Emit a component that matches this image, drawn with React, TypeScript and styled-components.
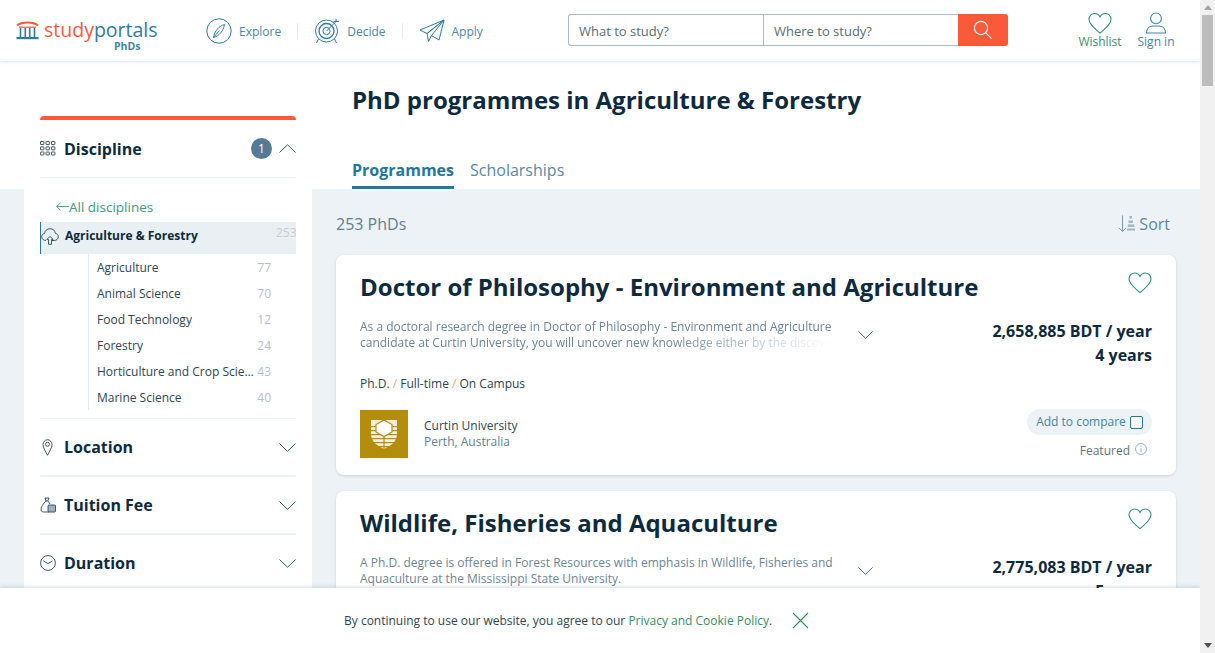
import React from "react";
import styled, { createGlobalStyle } from "styled-components";

const GlobalStyle = createGlobalStyle`
  html, body { margin: 0; padding: 0; background: #fff; overflow: hidden; }
  body { font-family: "Open Sans", "Liberation Sans", sans-serif; color: #0d2b3e; }
  * { box-sizing: border-box; }
`;

const Shell = styled.div`
  display: flex;
  height: 100vh;
  overflow: hidden;
`;

const Page = styled.div`
  width: 1200px;
  flex: none;
  height: 100vh;
  overflow: hidden;
  position: relative;
  display: flex;
  flex-direction: column;
`;

/* the window's scrollbar, as photographed */
const ScrollTrack = styled.div`
  width: 15px;
  flex: none;
  background: #f1f1f1;
  display: flex;
  flex-direction: column;
  align-items: center;
  padding: 5px 0;
`;

const ScrollArrow = styled.span<{ $down?: boolean }>`
  width: 0;
  height: 0;
  border-left: 4px solid transparent;
  border-right: 4px solid transparent;
  ${(p) =>
    p.$down
      ? "border-top: 5px solid #505050; margin-top: auto;"
      : "border-bottom: 5px solid #a3a3a3;"}
`;

const ScrollThumb = styled.span`
  width: 11px;
  height: 71px;
  margin-top: 5px;
  background: #bdbdbd;
`;

/* ---------- header ---------- */
const Header = styled.header`
  height: 61px;
  flex: none;
  display: flex;
  align-items: center;
  padding: 0 25px 0 16px;
  background: #fff;
  box-shadow: 0 1px 3px rgba(40, 80, 110, 0.15);
  position: relative;
  z-index: 2;
`;

const Logo = styled.div`
  width: 190px;
  display: flex;
  flex-direction: column;
  align-items: flex-start;
`;

const LogoRow = styled.div`
  display: flex;
  align-items: center;
  gap: 5px;
  height: 24px;
  margin-top: 9px;
`;

const LogoWord = styled.span<{ $accent?: boolean }>`
  font-family: "Open Sans", sans-serif;
  font-size: 19.5px;
  font-weight: 400;
  line-height: 24px;
  color: ${(p) => (p.$accent ? "#fb5a3a" : "#2d7d9e")};
`;

const LogoWords = styled.div`
  display: flex;
`;

const LogoSub = styled.div`
  font-size: 10.5px;
  font-weight: 700;
  color: #3f86a8;
  margin-left: 98px;
  line-height: 12px;
  margin-top: -2px;
`;

const Nav = styled.nav`
  display: flex;
  align-items: center;
  width: 362px;
  margin-top: 1px;
`;

const NavItem = styled.a`
  display: flex;
  align-items: center;
  gap: 7px;
  font-size: 12px;
  color: #4b87a8;
`;

const NavDivider = styled.span`
  width: 1px;
  height: 16px;
  background: #e6eef3;
  margin: 0 16px;
`;

const Search = styled.div`
  display: flex;
  width: 440px;
  height: 32px;
  margin-top: -1px;
`;

const SearchField = styled.div<{ $first?: boolean }>`
  width: 195px;
  border: 1px solid #a9bcc9;
  border-right-width: 0;
  border-radius: ${(p) => (p.$first ? "3px 0 0 3px" : "0")};
  font-size: 13px;
  color: #5c6d79;
  display: flex;
  align-items: center;
  padding: 2px 0 0 10px;
`;

const SearchButton = styled.button`
  width: 50px;
  border: 0;
  padding: 0;
  background: #fb5a3a;
  border-radius: 0 3px 3px 0;
  display: flex;
  align-items: center;
  justify-content: center;
`;

const HeaderActions = styled.div`
  margin-left: auto;
  display: flex;
  gap: 15px;
`;

const HeaderAction = styled.a<{ $green?: boolean }>`
  display: flex;
  flex-direction: column;
  align-items: center;
  font-size: 12px;
  line-height: 14px;
  width: ${(p) => (p.$green ? 44 : 38)}px;
  color: ${(p) => (p.$green ? "#3a8f78" : "#3f86a8")};

  svg {
    height: 23px;
  }
`;

/* ---------- body ---------- */
const Body = styled.div`
  display: flex;
  align-items: stretch;
  flex: 1;
`;

const SideColumn = styled.aside`
  width: 312px;
  flex: none;
  background: linear-gradient(#fff 128px, #edf2f6 128px);
  padding-left: 24px;
`;

const SidePanel = styled.div`
  background: #fff;
  padding: 55px 16px 0;
  height: 100%;
`;

const FilterHead = styled.div<{ $thin?: boolean }>`
  height: 58px;
  display: flex;
  align-items: center;
  border-bottom: ${(p) => (p.$thin ? 1 : 2)}px solid #edf2f6;
`;

const DisciplineBox = styled.div`
  border-top: 4px solid #fb5a3a;
  border-radius: 4px 4px 0 0;
`;

const FilterIcon = styled.span`
  width: 24px;
  flex: none;
  display: flex;
`;

const FilterTitle = styled.h3`
  margin: 0;
  font-size: 16px;
  font-weight: 700;
  color: #0d2b3e;
  flex: 1;
`;

const Badge = styled.span`
  width: 21px;
  height: 21px;
  border-radius: 50%;
  background: #557a94;
  color: #fff;
  font-size: 12px;
  display: flex;
  align-items: center;
  justify-content: center;
  margin-right: 7px;
`;

const BackLink = styled.a`
  display: flex;
  align-items: center;
  height: 44px;
  padding: 13px 0 0 16px;
  font-size: 13.5px;
  color: #3f9b7f;
`;

const ActiveRow = styled.div`
  height: 32px;
  background: #e8f0f3;
  border-left: 1px solid #24789a;
  display: flex;
  align-items: flex-start;
  font-size: 12px;
  line-height: 16px;
  font-weight: 700;
  padding-top: 6px;
  gap: 6px;
`;

const ActiveIcon = styled.span`
  display: flex;
`;

const ActiveCount = styled.span`
  margin-left: auto;
  margin-top: -3px;
  font-weight: 400;
  color: #c5ced6;
  width: 20px;
  overflow: hidden;
`;

const SubList = styled.ul`
  list-style: none;
  margin: 0 0 8px 48px;
  padding: 0 25px 0 8px;
  border-left: 1px solid #e6ecf0;
  height: 156px;
`;

const SubItem = styled.li`
  height: 26px;
  display: flex;
  align-items: center;
  justify-content: space-between;
  font-size: 12px;
  color: #2c4656;
`;

const SubName = styled.span`
  white-space: nowrap;
  overflow: hidden;
  text-overflow: ellipsis;
  max-width: 158px;
`;

const SubCount = styled.span`
  color: #b4c0c9;
`;

const Rule = styled.div`
  height: 1px;
  background: #edf2f6;
`;

/* ---------- results ---------- */
const Results = styled.main`
  flex: 1;
  min-width: 0;
`;

const TopBand = styled.div`
  height: 128px;
  background: #fff;
  padding: 23px 0 0 40px;
  display: flex;
  flex-direction: column;
`;

const PageTitle = styled.h1`
  margin: -1px 0 0;
  font-size: 24px;
  line-height: 33px;
  font-weight: 700;
  color: #0d2b3e;
`;

const Tabs = styled.div`
  margin-top: auto;
  display: flex;
  gap: 16px;
`;

const Tab = styled.a<{ $active?: boolean }>`
  font-size: 16px;
  line-height: 22px;
  padding-bottom: 5px;
  font-weight: ${(p) => (p.$active ? 700 : 400)};
  color: ${(p) => (p.$active ? "#24789a" : "#5a8aa5")};
  border-bottom: 3px solid ${(p) => (p.$active ? "#24789a" : "transparent")};
`;

const ResultsBody = styled.div`
  background: #edf2f6;
  padding: 0 24px 40px;
`;

const ResultsBar = styled.div`
  height: 66px;
  padding: 4px 6px 0 0;
  display: flex;
  align-items: center;
  justify-content: space-between;
  font-size: 16px;
  color: #5f7f94;
`;

const SortLink = styled.span`
  display: flex;
  align-items: center;
  gap: 3px;
  color: #5f86a3;
`;

const Card = styled.article`
  background: #fff;
  border-radius: 8px;
  height: 220px;
  margin-bottom: 16px;
  padding: 15px 24px 0;
  box-shadow: 0 1px 3px rgba(40, 80, 110, 0.18);
  display: flex;
  flex-direction: column;
`;

const CardHead = styled.div`
  display: flex;
  justify-content: space-between;
  height: 36px;
`;

const CardTitle = styled.h2`
  margin: 0;
  font-size: 24px;
  line-height: 34px;
  font-weight: 700;
  color: #0d2b3e;
`;

const CardHeart = styled.span`
  margin-top: 2px;
`;

const CardMiddle = styled.div`
  display: flex;
  margin-top: 13px;
  height: 54px;
`;

const Description = styled.p<{ $fade?: boolean }>`
  margin: 0;
  width: 490px;
  height: 32px;
  overflow: hidden;
  font-size: 12px;
  line-height: 16px;
  color: #6c8698;
  ${(p) =>
    p.$fade
      ? `-webkit-mask: linear-gradient(#000, #000) top / 100% 16px no-repeat,
           linear-gradient(90deg, #000 62%, transparent 96%) bottom / 100% 16px no-repeat;
         mask: linear-gradient(#000, #000) top / 100% 16px no-repeat,
           linear-gradient(90deg, #000 62%, transparent 96%) bottom / 100% 16px no-repeat;`
      : ""}
`;

const Expand = styled.span`
  margin-left: 8px;
  margin-top: 3px;
`;

const Price = styled.div`
  margin-left: auto;
  text-align: right;
  font-size: 16px;
  line-height: 24px;
  font-weight: 700;
  color: #0d2b3e;
`;

const Meta = styled.div`
  font-size: 12px;
  line-height: 16px;
  color: #2c4656;
  margin-top: 3px;
`;

const Slash = styled.span`
  color: #f2a36b;
`;

const CardFoot = styled.div`
  display: flex;
  align-items: flex-start;
  margin-top: 18px;
`;

const UniLogo = styled.div`
  width: 48px;
  height: 48px;
  background: #b38d0b;
  display: flex;
  align-items: center;
  justify-content: center;
`;

const UniText = styled.div`
  margin-left: 16px;
  padding-top: 8px;
  font-size: 12px;
  line-height: 16px;
  color: #2c4656;
`;

const UniPlace = styled.div`
  color: #5f7f94;
`;

const CompareCol = styled.div`
  margin-left: auto;
  display: flex;
  flex-direction: column;
  align-items: flex-end;
`;

const ComparePill = styled.div`
  height: 26px;
  width: 125px;
  margin-top: -1px;
  border-radius: 13px;
  background: #edf2f6;
  display: flex;
  align-items: center;
  justify-content: center;
  gap: 4px;
  font-size: 12px;
  line-height: 16px;
  color: #3f86a8;
`;

const CompareBox = styled.span`
  width: 13px;
  height: 13px;
  border: 1px solid #24789a;
  border-radius: 2px;
  background: #fff;
`;

const Featured = styled.div`
  display: flex;
  align-items: center;
  gap: 5px;
  font-size: 12px;
  color: #5f7480;
  margin: 7px 5px 0 0;
`;

const InfoWrap = styled.span`
  display: flex;
  margin-top: -3px;
`;

/* ---------- cookie bar ---------- */
const CookieBar = styled.div`
  position: absolute;
  left: 0;
  right: 0;
  bottom: 0;
  height: 65px;
  background: #fff;
  box-shadow: 0 -1px 4px rgba(40, 80, 110, 0.2);
  display: flex;
  align-items: center;
  padding-left: 344px;
  font-size: 12px;
  color: #2c4656;
  z-index: 5;
`;

const CookieLink = styled.a`
  color: #2f9068;
`;

const CookieClose = styled.span`
  margin-left: 20px;
  display: flex;
`;

/* ---------- drawings ---------- */
const Heart: React.FC<{ size?: number }> = ({ size = 24 }) => (
  <svg width={size} height={size * 0.92} viewBox="0 0 24 22" fill="none" stroke="#2a8f80" strokeWidth="1.1">
    <path d="M12 20.6 C8 17 1 12.4 1 6.8 C1 3.4 3.6 1 6.6 1 C9 1 11 2.4 12 4.4 C13 2.4 15 1 17.4 1 C20.4 1 23 3.4 23 6.8 C23 12.4 16 17 12 20.6 Z" />
  </svg>
);

const Chevron: React.FC<{ up?: boolean; size?: number }> = ({ up, size = 17 }) => (
  <svg width={size} height={size * 0.53} viewBox="0 0 17 9" fill="none" stroke="#25597a" strokeWidth="1">
    <path d={up ? "M0.5 8.5 L8.5 0.7 L16.5 8.5" : "M0.5 0.5 L8.5 8.3 L16.5 0.5"} />
  </svg>
);

const CompassIcon = () => (
  <svg width="26" height="26" viewBox="0 0 26 26" fill="none" stroke="#2d7d9e" strokeWidth="1">
    <circle cx="13" cy="13" r="12.2" />
    <path d="M18.5 6.5 C13 8 8.5 13 7.5 19.5 C13 18 17.5 13 18.5 6.5 Z M7.5 19.5 L13.5 12.5" />
  </svg>
);

const TargetIcon = () => (
  <svg width="26" height="26" viewBox="0 0 26 26" fill="none" stroke="#2d7d9e" strokeWidth="1">
    <circle cx="12.5" cy="13" r="11" />
    <circle cx="12.5" cy="13" r="7.5" strokeWidth="1.3" />
    <circle cx="12.5" cy="13" r="3.6" />
    <path d="M12.5 13 L22 3.5 M19.5 3.5 L22 3.5 L22 1 M22 3.5 L25 3.5 M4.5 21 L2.5 25 M20.5 21 L22.5 25" />
  </svg>
);

const PlaneIcon = () => (
  <svg width="26" height="24" viewBox="0 0 26 24" fill="none" stroke="#2d7d9e" strokeWidth="1">
    <path d="M25 1 L1 11 L8 14.5 Z M25 1 L8 14.5 L9.5 22.5 L12.5 16.5 M25 1 L12.5 16.5 L20 21 Z" />
  </svg>
);

const SearchIcon = () => (
  <svg width="20" height="20" viewBox="0 0 20 20" fill="none" stroke="#fff" strokeWidth="1.1">
    <circle cx="8" cy="8" r="6.6" />
    <path d="M12.8 12.8 L18.6 18.6" />
  </svg>
);

const UserIcon = () => (
  <svg width="22" height="23" viewBox="0 0 22 23" fill="none" stroke="#3f86a8" strokeWidth="1.1">
    <circle cx="11" cy="6.4" r="5.4" />
    <path d="M1.5 21 C1.5 16.5 4.5 14 8 14 L14 14 C17.5 14 20.5 16.5 20.5 21 Z" />
  </svg>
);

const LogoMark = () => (
  <svg width="23" height="20" viewBox="0 0 23 20" fill="none">
    <path d="M1 5.5 C6 1.5 17 1.5 22 5.5" stroke="#fb5a3a" strokeWidth="2.2" />
    <path d="M3 7.2 H20" stroke="#fb5a3a" strokeWidth="1.2" />
    <path d="M4.5 8 V17 M9.3 8 V17 M13.7 8 V17 M18.5 8 V17" stroke="#2d7d9e" strokeWidth="1.6" />
    <rect x="0.5" y="17" width="22" height="2.2" fill="#2d7d9e" />
  </svg>
);

const GridIcon = () => (
  <svg width="16" height="15" viewBox="0 0 16 15" fill="none" stroke="#2c4656" strokeWidth="0.9">
    {[0.5, 6, 11.5].map((x) =>
      [0.5, 5.8, 11].map((y) => <rect key={`${x}-${y}`} x={x} y={y} width="3.4" height="3" rx="0.4" />)
    )}
  </svg>
);

const PinIcon = () => (
  <svg width="15" height="17" viewBox="0 0 15 17" fill="none" stroke="#2c4656" strokeWidth="0.9">
    <path d="M7.5 16.3 C5.5 12 3 9 3 5.5 C3 3 5 0.7 7.5 0.7 C10 0.7 12 3 12 5.5 C12 9 9.5 12 7.5 16.3 Z" />
    <circle cx="7.5" cy="5.3" r="2" />
  </svg>
);

const FeeIcon = () => (
  <svg width="16" height="16" viewBox="0 0 16 16" fill="none" stroke="#2c4656" strokeWidth="0.9">
    <path d="M5 1 L9 1 L7.8 4 L6 4 Z M6 4 C3 7 0.8 10 1 13 C1.2 14.8 3 15 5 15 L9 15" />
    <path d="M7.8 4 C8.5 5 9.5 6 10 7" />
    <rect x="8" y="8" width="7.5" height="7" rx="1" fill="#9db2c0" />
  </svg>
);

const ClockIcon = () => (
  <svg width="16" height="16" viewBox="0 0 16 16" fill="none" stroke="#2c4656" strokeWidth="0.9">
    <circle cx="8" cy="8" r="7.4" />
    <path d="M3.5 6 L8 8.6 L12.5 6" />
  </svg>
);

const TreeIcon = () => (
  <svg width="18" height="17" viewBox="0 0 18 17" fill="none" stroke="#2c4656" strokeWidth="0.9">
    <path d="M5 12.5 C2.5 12.5 0.7 11 0.7 8.8 C0.7 7 2 5.6 3.6 5.4 C3.8 2.8 6 0.7 9 0.7 C12 0.7 14.2 2.8 14.4 5.4 C16 5.6 17.3 7 17.3 8.8 C17.3 11 15.5 12.5 13 12.5 L11 12.5" />
    <path d="M7.5 16.3 L7.5 11.5 L5.8 11.5 L9 8.5 L12.2 11.5 L10.5 11.5 L10.5 16.3 Z" />
  </svg>
);

const SortIcon = () => (
  <svg width="18" height="18" viewBox="0 0 18 18" fill="none" stroke="#7c97ab" strokeWidth="1">
    <path d="M4.5 0.5 V16.5 M1 12.8 L4.5 16.5 L8 12.8" />
    <rect x="11.5" y="1" width="2.4" height="2.6" fill="#9fb4c4" stroke="none" />
    <rect x="10.5" y="5.5" width="4.5" height="2.4" fill="#9fb4c4" stroke="none" />
    <rect x="9.8" y="9.5" width="6.5" height="2.4" fill="#9fb4c4" stroke="none" />
    <rect x="9" y="13.5" width="8" height="2" fill="#9fb4c4" stroke="none" />
  </svg>
);

const InfoIcon = () => (
  <svg width="12" height="12" viewBox="0 0 12 12" fill="none" stroke="#7f9cc0" strokeWidth="0.8">
    <circle cx="6" cy="6" r="5.5" />
    <path d="M6 5 V9.2 M6 2.8 V4" />
  </svg>
);

const ArrowLeft = () => (
  <svg width="13" height="9" viewBox="0 0 13 9" fill="none" stroke="#3f9b7f" strokeWidth="0.9">
    <path d="M13 4.5 H0.8 M4.5 0.6 L0.8 4.5 L4.5 8.4" />
  </svg>
);

const CloseIcon = () => (
  <svg width="17" height="17" viewBox="0 0 17 17" fill="none" stroke="#2f9068" strokeWidth="1.1">
    <path d="M1 1 L16 16 M16 1 L1 16" />
  </svg>
);

const CurtinCrest = () => (
  <svg width="28" height="32" viewBox="0 0 28 32">
    <path d="M1 2 H27 V16 C27 24 20 28 14 31 C8 28 1 24 1 16 Z" fill="#f6efd8" />
    {[8, 12, 16, 20, 24, 28].map((y) => (
      <rect key={y} x="0" y={y} width="28" height="1.2" fill="#b38d0b" />
    ))}
    <rect x="13.4" y="17" width="1.2" height="15" fill="#b38d0b" />
    <path d="M14 2 L22 6.5 L22 14 L14 18.5 L6 14 L6 6.5 Z" fill="#fff" stroke="#b38d0b" strokeWidth="1.2" />
  </svg>
);

const subjects = [
  { name: "Agriculture", count: 77 },
  { name: "Animal Science", count: 70 },
  { name: "Food Technology", count: 12 },
  { name: "Forestry", count: 24 },
  { name: "Horticulture and Crop Science", count: 43 },
  { name: "Marine Science", count: 40 },
];

const filters = [
  { name: "Location", icon: <PinIcon /> },
  { name: "Tuition Fee", icon: <FeeIcon /> },
  { name: "Duration", icon: <ClockIcon /> },
];

const programmes = [
  {
    title: "Doctor of Philosophy - Environment and Agriculture",
    text: "As a doctoral research degree in Doctor of Philosophy - Environment and Agriculture candidate at Curtin University, you will uncover new knowledge either by the discovery of new",
    fee: "2,658,885 BDT / year",
    years: "4 years",
    uni: "Curtin University",
    place: "Perth, Australia",
    fade: true,
  },
  {
    title: "Wildlife, Fisheries and Aquaculture",
    text: "A Ph.D. degree is offered in Forest Resources with emphasis in Wildlife, Fisheries and Aquaculture at the Mississippi State University.",
    fee: "2,775,083 BDT / year",
    years: "5 years",
    uni: "Mississippi State University",
    place: "Starkville, United States",
    fade: false,
  },
];

export default function App() {
  return (
    <Shell>
      <GlobalStyle />
      <Page>
        <Header>
          <Logo>
            <LogoRow>
              <LogoMark />
              <LogoWords>
                <LogoWord $accent>study</LogoWord>
                <LogoWord>portals</LogoWord>
              </LogoWords>
            </LogoRow>
            <LogoSub>PhDs</LogoSub>
          </Logo>
          <Nav>
            <NavItem><CompassIcon />Explore</NavItem>
            <NavDivider />
            <NavItem><TargetIcon />Decide</NavItem>
            <NavDivider />
            <NavItem><PlaneIcon />Apply</NavItem>
          </Nav>
          <Search>
            <SearchField $first>What to study?</SearchField>
            <SearchField>Where to study?</SearchField>
            <SearchButton><SearchIcon /></SearchButton>
          </Search>
          <HeaderActions>
            <HeaderAction $green><Heart />Wishlist</HeaderAction>
            <HeaderAction><UserIcon />Sign in</HeaderAction>
          </HeaderActions>
        </Header>

        <Body>
          <SideColumn>
            <SidePanel>
              <DisciplineBox>
                <FilterHead $thin>
                  <FilterIcon><GridIcon /></FilterIcon>
                  <FilterTitle>Discipline</FilterTitle>
                  <Badge>1</Badge>
                  <Chevron up />
                </FilterHead>
              </DisciplineBox>
              <BackLink><ArrowLeft />All disciplines</BackLink>
              <ActiveRow>
                <ActiveIcon><TreeIcon /></ActiveIcon>
                Agriculture &amp; Forestry
                <ActiveCount>253</ActiveCount>
              </ActiveRow>
              <SubList>
                {subjects.map((s) => (
                  <SubItem key={s.name}>
                    <SubName>{s.name}</SubName>
                    <SubCount>{s.count}</SubCount>
                  </SubItem>
                ))}
              </SubList>
              <Rule />
              {filters.map((f) => (
                <FilterHead key={f.name}>
                  <FilterIcon>{f.icon}</FilterIcon>
                  <FilterTitle>{f.name}</FilterTitle>
                  <Chevron />
                </FilterHead>
              ))}
            </SidePanel>
          </SideColumn>

          <Results>
            <TopBand>
              <PageTitle>PhD programmes in Agriculture &amp; Forestry</PageTitle>
              <Tabs>
                <Tab $active>Programmes</Tab>
                <Tab>Scholarships</Tab>
              </Tabs>
            </TopBand>
            <ResultsBody>
              <ResultsBar>
                <span>253 PhDs</span>
                <SortLink><SortIcon />Sort</SortLink>
              </ResultsBar>
              {programmes.map((p) => (
                <Card key={p.title}>
                  <CardHead>
                    <CardTitle>{p.title}</CardTitle>
                    <CardHeart><Heart /></CardHeart>
                  </CardHead>
                  <CardMiddle>
                    <Description $fade={p.fade}>{p.text}</Description>
                    <Expand><Chevron size={15} /></Expand>
                    <Price>
                      <div>{p.fee}</div>
                      <div>{p.years}</div>
                    </Price>
                  </CardMiddle>
                  <Meta>Ph.D. <Slash>/</Slash> Full-time <Slash>/</Slash> On Campus</Meta>
                  <CardFoot>
                    <UniLogo><CurtinCrest /></UniLogo>
                    <UniText>
                      <div>{p.uni}</div>
                      <UniPlace>{p.place}</UniPlace>
                    </UniText>
                    <CompareCol>
                      <ComparePill>Add to compare<CompareBox /></ComparePill>
                      <Featured>Featured <InfoWrap><InfoIcon /></InfoWrap></Featured>
                    </CompareCol>
                  </CardFoot>
                </Card>
              ))}
            </ResultsBody>
          </Results>
        </Body>

        <CookieBar>
          <span>
            By continuing to use our website, you agree to our <CookieLink>Privacy and Cookie Policy</CookieLink>.
          </span>
          <CookieClose><CloseIcon /></CookieClose>
        </CookieBar>
      </Page>
      <ScrollTrack>
        <ScrollArrow />
        <ScrollThumb />
        <ScrollArrow $down />
      </ScrollTrack>
    </Shell>
  );
}
